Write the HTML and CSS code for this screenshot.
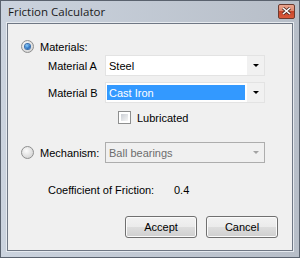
FILE: index.html
```html
<!DOCTYPE html>
<html>
<head>
<meta charset="utf-8">
<link rel="stylesheet" href="styles.css">
</head>
<body>
<div class="window">
  <div class="titlebar">
    <span class="title">Friction Calculator</span>
    <span class="close"><svg width="9" height="8" viewBox="0 0 9 8"><path d="M1 1 L8 7 M8 1 L1 7" stroke="#4a2a22" stroke-width="3"/><path d="M1 1 L8 7 M8 1 L1 7" stroke="#fff" stroke-width="1.6"/></svg></span>
  </div>
  <div class="client">
    <div class="row r-materials">
      <span class="radio checked"><span class="dot"></span></span>
      <span class="lbl">Materials:</span>
    </div>
    <div class="row r-matA">
      <span class="fieldlbl">Material A</span>
      <div class="combo"><span class="val">Steel</span><span class="btn"><span class="arrow"></span></span></div>
    </div>
    <div class="row r-matB">
      <span class="fieldlbl">Material B</span>
      <div class="combo"><span class="val sel">Cast Iron</span><span class="btn"><span class="arrow"></span></span></div>
    </div>
    <div class="row r-lub">
      <span class="check"></span>
      <span class="lbl">Lubricated</span>
    </div>
    <div class="row r-mech">
      <span class="radio"></span>
      <span class="lbl mechlbl">Mechanism:</span>
      <div class="combo disabled"><span class="val">Ball bearings</span><span class="btn"><span class="arrow"></span></span></div>
    </div>
    <div class="row r-coef">
      <span class="coeflbl">Coefficient of Friction:</span>
      <span class="coefval">0.4</span>
    </div>
    <div class="row r-btns">
      <span class="button">Accept</span>
      <span class="button">Cancel</span>
    </div>
  </div>
</div>
</body>
</html>
```
FILE: styles.css
```css
html, body { margin: 0; padding: 0; background: #fff; }
.window {
  width: 300px; height: 258px; box-sizing: border-box;
  border: 1px solid #5a626e;
  background: linear-gradient(to right, #cbd3de, #b7bec8);
  padding: 0 6px 6px 6px;
  display: flex; flex-direction: column;
  font-family: "Liberation Sans", Arial, sans-serif;
  font-size: 11px; color: #000;
}
.titlebar {
  height: 22px; display: flex; align-items: center; justify-content: space-between;
}
.title {
  font-family: "Open Sans", "Noto Sans", sans-serif; font-size: 11.5px;
  color: #1a1a1a; padding-left: 1px; margin-top: -2px;
}
.close {
  width: 17px; height: 15px; box-sizing: border-box; margin-right: -2px; margin-top: -2px;
  border: 1px solid #6b3b30; border-radius: 2px;
  background: linear-gradient(#eaa58f 0%, #e08a70 45%, #c7462c 50%, #d9593a 100%);
  display: flex; align-items: center; justify-content: center;
}
.client {
  flex: 1; border: 1px solid #6f7784; background: #f0f0f0;
  box-shadow: 0 0 0 1px #e6eaef;
  display: flex; flex-direction: column;
}
.row { display: flex; align-items: center; }
.r-materials { margin-top: 16px; height: 13px; padding-left: 13px; }
.r-matA { margin-top: 2px; height: 21px; padding-left: 40px; }
.r-matB { margin-top: 6px; height: 21px; padding-left: 40px; }
.r-lub { margin-top: 8px; height: 13px; padding-left: 110px; }
.r-mech { margin-top: 18px; height: 21px; padding-left: 13px; }
.r-coef { margin-top: 20px; height: 13px; padding-left: 40px; }
.r-btns { margin-top: 20px; height: 22px; justify-content: flex-end; padding-right: 14px; gap: 9px; }
.lbl { margin-left: 6px; }
.mechlbl { width: 65px; }
.fieldlbl { width: 57px; }
.coeflbl { width: 126px; }
.radio {
  width: 13px; height: 13px; box-sizing: border-box; border-radius: 50%;
  border: 1px solid #8e8f8f;
  background: radial-gradient(circle at 40% 35%, #fcfcfc, #d9d9d9 70%, #cfcfcf);
  display: flex; align-items: center; justify-content: center;
}
.radio .dot {
  width: 5px; height: 5px; border-radius: 50%;
  background: radial-gradient(circle at 40% 35%, #8ad0ff, #1d63b8 70%);
  box-shadow: 0 0 0 1px #3a6fab;
}
.check {
  width: 13px; height: 13px; box-sizing: border-box;
  border: 1px solid #8e8f8f;
  background: #fff;
  padding: 2px;
}
.check::before {
  content: ""; display: block; width: 100%; height: 100%;
  background: linear-gradient(135deg, #cbcfd5, #f6f6f6);
}
.combo {
  width: 160px; height: 21px; box-sizing: border-box;
  border: 1px solid #e3e3e3; background: #fff;
  display: flex; align-items: stretch;
}
.combo .val {
  flex: 1; display: flex; align-items: center; padding-left: 2px; margin: 2px 2px 2px 1px;
}
.combo .val.sel { background: #3399ff; color: #fff; }
.combo .btn {
  width: 17px; background: #f1f1f1; display: flex; align-items: center; justify-content: center;
}
.arrow {
  width: 0; height: 0; border-left: 3px solid transparent; border-right: 3px solid transparent;
  border-top: 3px solid #000; margin-left: 1px;
}
.combo.disabled { border-color: #adadad; background: #f0f0f0; color: #6d6d6d; }
.combo.disabled .btn { background: transparent; }
.combo.disabled .arrow { border-top-color: #a3a3a3; }
.button {
  width: 72px; height: 22px; box-sizing: border-box;
  border: 1px solid #707070; border-radius: 3px;
  background: linear-gradient(#f2f2f2 0%, #ebebeb 50%, #dddddd 51%, #cfcfcf 100%);
  box-shadow: inset 0 0 0 1px #fbfbfb;
  display: flex; align-items: center; justify-content: center;
}
```
